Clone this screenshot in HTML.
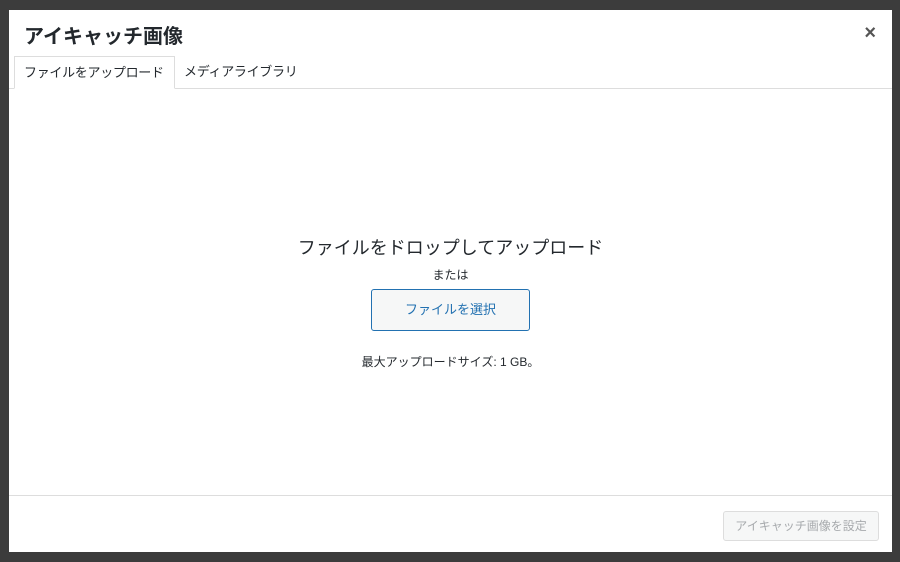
<!DOCTYPE html><html><head><meta charset="utf-8"><style>
*{margin:0;padding:0;box-sizing:border-box}
body{width:900px;height:562px;background:#3c3c3c;position:relative;overflow:hidden;font-family:"Liberation Sans","Noto Sans CJK JP",sans-serif;color:#23282d}
.m{position:absolute;left:9px;top:10px;width:883px;height:542px;background:#fff}
.t{position:absolute;left:15px;top:10px;font-size:20px;font-weight:bold}
.x{position:absolute;right:16px;top:12px;font-size:20px;font-weight:bold;color:#555}
.hl{position:absolute;left:0;right:0;top:78px;border-top:1px solid #ddd}
.tab{position:absolute;top:46px;height:33px;font-size:13px;line-height:32px;padding:0 9px;white-space:nowrap;letter-spacing:-0.3px}
.a{left:5px;width:161px;border:1px solid #ddd;border-bottom:1px solid #fff;background:#fff}
.c{position:absolute;left:0;right:0;text-align:center}
.btn{position:absolute;left:362px;top:279px;width:159px;height:42px;border:1px solid #2271b1;border-radius:3px;background:#f6f7f7;color:#2271b1;font-size:13px;line-height:40px;text-align:center}
.fl{position:absolute;left:0;right:0;top:485px;border-top:1px solid #ddd}
.sb{position:absolute;left:714px;top:501px;width:156px;height:30px;border:1px solid #ddd;border-radius:3px;background:#f6f7f7;color:#a7aaad;font-size:12px;line-height:28px;text-align:center;white-space:nowrap}
</style></head><body>
<div class="m">
<div class="t">アイキャッチ画像</div><div class="x">×</div>
<div class="hl"></div>
<div class="tab a">ファイルをアップロード</div>
<div class="tab" style="left:166px">メディアライブラリ</div>
<div class="c" style="top:224px;font-size:18px">ファイルをドロップしてアップロード</div>
<div class="c" style="top:256px;font-size:12px">または</div>
<div class="btn">ファイルを選択</div>
<div class="c" style="top:343px;font-size:12px">最大アップロードサイズ: 1 GB。</div>
<div class="fl"></div>
<div class="sb">アイキャッチ画像を設定</div>
</div>
</body></html>
